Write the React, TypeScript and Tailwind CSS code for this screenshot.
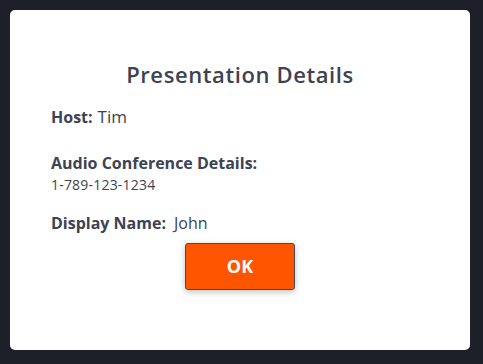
import React from 'react';

export default function App() {
  return (
    <div className="w-[483px] h-[364px] bg-[#1d2029] pt-[10px] pl-[10px]">
      <div className="w-[460px] h-[340px] rounded-[5px] bg-white text-[#3d4352] px-[41px] pt-[50px] font-['Open_Sans',sans-serif]">
        <h1 className="text-center text-[22px] leading-[28px] font-semibold tracking-[0.6px] font-['Open_Sans',sans-serif]">
          Presentation Details
        </h1>
        <div className="mt-[16px] flex items-baseline gap-[5px]">
          <span className="text-[16px] font-bold">Host:</span>
          <span className="text-[17px] font-normal">Tim</span>
        </div>
        <div className="mt-[22px] text-[16px] font-bold leading-[22px]">Audio Conference Details:</div>
        <div className="mt-[1px] text-[14px] leading-[20px] tracking-[0.2px]">1-789-123-1234</div>
        <div className="mt-[16px] flex items-baseline gap-[8px]">
          <span className="text-[16px] font-bold">Display Name:</span>
          <span className="text-[16px]">John</span>
        </div>
        <div className="mt-[8px] flex justify-center">
          <button className="w-[110px] h-[47px] rounded-[3px] bg-[#ff5500] border border-[#4a4a4a] text-white text-[18px] font-bold shadow-[0_2px_6px_rgba(0,0,0,0.25)]">
            OK
          </button>
        </div>
      </div>
    </div>
  );
}
